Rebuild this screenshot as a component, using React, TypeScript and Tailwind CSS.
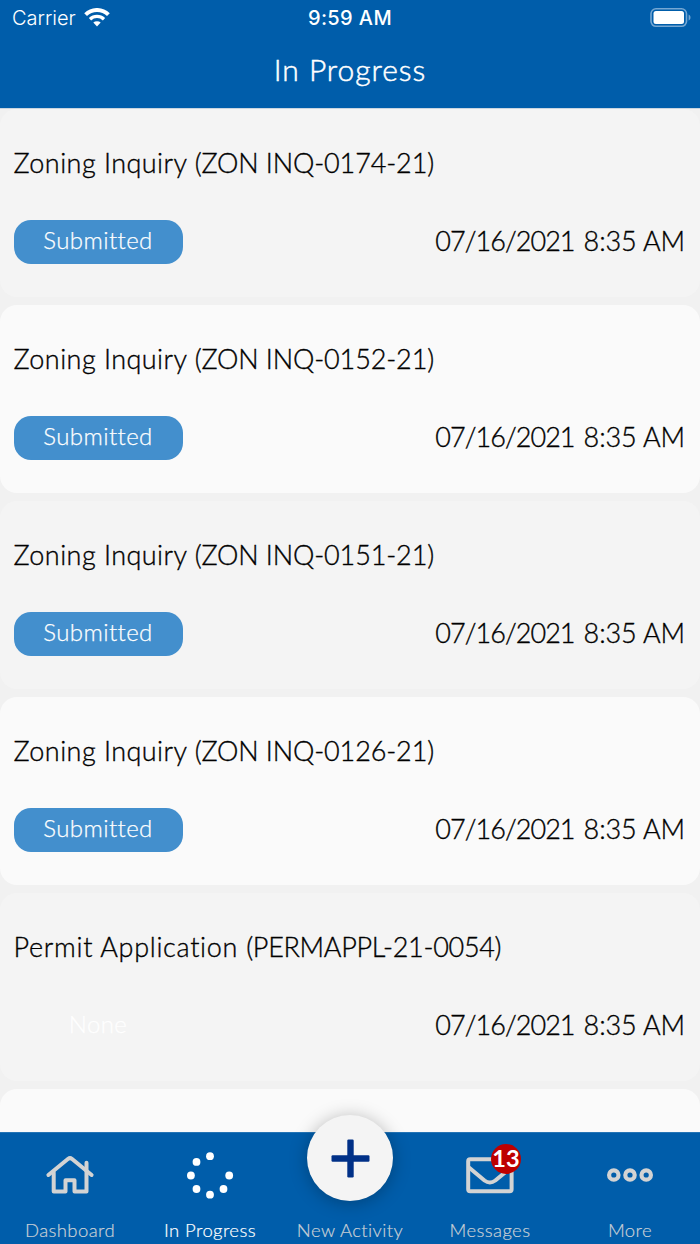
import React from "react";

type Item = { title: string; code: string; status: "Submitted" | "None"; titleTracking: string; codeTracking: string };

const zoning = { title: "Zoning Inquiry", status: "Submitted", titleTracking: "tracking-[0.45px]", codeTracking: "tracking-[-0.12px]" } as const;

const items: Item[] = [
  { ...zoning, code: "(ZON INQ-0174-21)" },
  { ...zoning, code: "(ZON INQ-0152-21)" },
  { ...zoning, code: "(ZON INQ-0151-21)" },
  { ...zoning, code: "(ZON INQ-0126-21)" },
  {
    title: "Permit Application",
    code: "(PERMAPPL-21-0054)",
    status: "None",
    titleTracking: "tracking-[0.7px]",
    codeTracking: "tracking-[-0.3px]",
  },
];

function Wifi() {
  return (
    <svg width="26" height="20" viewBox="0 0 26 20" fill="none" stroke="#fff">
      <path d="M1.6 6.6a16.4 16.4 0 0 1 22.8 0" strokeWidth="4" />
      <path d="M6 11.2a10.2 10.2 0 0 1 14 0" strokeWidth="3.3" />
      <path d="M13 18.4l-3.7-3.8a5.4 5.4 0 0 1 7.4 0z" fill="#fff" stroke="none" />
    </svg>
  );
}

function Battery() {
  return (
    <svg width="42" height="20" viewBox="0 0 42 20">
      <rect x="1" y="0.8" width="35.5" height="17.5" rx="5" fill="none" stroke="#75a7d3" strokeWidth="1.6" />
      <rect x="3.5" y="3" width="30.5" height="13" rx="2.5" fill="#fff" />
      <path d="M38.6 6.4c2.5 1 2.5 5 0 6z" fill="#75a7d3" />
    </svg>
  );
}

function HomeIcon() {
  return (
    <svg width="50" height="42" viewBox="0 0 50 42" fill="none" stroke="#d3d3d3" strokeWidth="4" strokeLinecap="round" strokeLinejoin="round">
      <path d="M3.4 21L23.2 4.8q1.8-1.4 3.6 0L46.6 21" />
      <path d="M8.7 18.5V37.4H20.5V26.2H29.5V37.4H41.5V8.8" />
    </svg>
  );
}

const dots = [[23, 4.2], [9.5, 9.9], [3.9, 23.5], [9.5, 37], [23, 42.7], [36.5, 37], [42.2, 23.5]];

function ProgressIcon() {
  return (
    <svg width="47" height="47" viewBox="0 0 47 47" fill="#fff">
      {dots.map(([x, y]) => (
        <circle key={`${x}-${y}`} cx={x} cy={y} r="3.9" />
      ))}
    </svg>
  );
}

function MailIcon() {
  return (
    <svg width="48" height="37" viewBox="0 0 48 37" fill="none" stroke="#d3d3d3" strokeWidth="4" strokeLinejoin="round">
      <rect x="2.2" y="2.2" width="43.4" height="32" rx="2" />
      <path d="M3 10.5L18.5 23.5q5.4 4 10.8 0L45 10.5" />
    </svg>
  );
}

function MoreIcon() {
  return (
    <svg width="46" height="14" viewBox="0 0 46 14" fill="none" stroke="#d3d3d3" strokeWidth="4.2">
      <circle cx="6.8" cy="7" r="4.7" />
      <circle cx="23" cy="7" r="4.7" />
      <circle cx="39.2" cy="7" r="4.7" />
    </svg>
  );
}

function Tab({ label, active, children }: { label: string; active?: boolean; children?: React.ReactNode }) {
  return (
    <div className="flex flex-1 flex-col items-center">
      <div className="flex h-[85px] items-center justify-center pb-px">{children}</div>
      <span
        className={`text-[18.5px] leading-6 font-light tracking-[0.4px] whitespace-nowrap [-webkit-text-stroke:0.2px] ${active ? "text-white" : "text-[#c9d0d6]"}`}
      >
        {label}
      </span>
    </div>
  );
}

export default function App() {
  return (
    <div className="flex h-[1244px] w-[700px] flex-col overflow-hidden bg-[#f1f1f1] font-['Lato',sans-serif]">
      <header className="flex h-[108px] shrink-0 flex-col bg-[#005daa] text-white">
        <div className="grid h-9 grid-cols-3 items-center pr-2 pl-3 font-['Inter',sans-serif] text-[20px]">
          <div className="flex items-center gap-2">
            <span className="font-light">Carrier</span>
            <Wifi />
          </div>
          <span className="pr-1 text-center font-medium tracking-[0.4px]">9:59 AM</span>
          <div className="flex justify-end">
            <Battery />
          </div>
        </div>
        <h1 className="flex h-[67px] items-center justify-center text-[30px] font-light tracking-[0.95px] [-webkit-text-stroke:0.5px]">In Progress</h1>
      </header>

      <main className="flex h-[1024px] shrink-0 flex-col gap-2 overflow-hidden border-t border-[#c9d5e0]">
        {items.map((item, i) => (
          <section
            key={item.code}
            className={`flex h-[188px] shrink-0 flex-col rounded-[17px] pr-[15px] pl-[13.5px] ${i % 2 ? "bg-[#fafafa]" : "bg-[#f4f4f4]"}`}
          >
            <h2
              className={`mt-[34px] h-10 text-[27px] leading-10 font-light whitespace-nowrap text-black [-webkit-text-stroke:0.35px] ${item.titleTracking}`}
            >
              {item.title} <span className={item.codeTracking}>{item.code}</span>
            </h2>
            <div className="mt-[37px] flex h-11 items-center justify-between">
              <span
                className={`flex h-11 w-[169px] items-center justify-center rounded-[17px] pb-[5px] text-[24px] font-light tracking-[0.4px] text-white [-webkit-text-stroke:0.25px] ${item.status === "Submitted" ? "bg-[#438fcd]" : ""}`}
              >
                {item.status}
              </span>
              <time className="flex gap-[9px] pb-0.5 text-[27px] font-light text-black [-webkit-text-stroke:0.35px]">
                <span className="tracking-[-0.95px]">07/16/2021</span>
                <span className="tracking-[-0.1px]">8:35 AM</span>
              </time>
            </div>
          </section>
        ))}
        <section className="h-[188px] shrink-0 rounded-[17px] bg-[#fafafa]" />
      </main>

      <nav className="relative flex h-28 shrink-0 border-t border-[#2474b6] bg-[#005daa]">
        <Tab label="Dashboard"><HomeIcon /></Tab>
        <Tab label="In Progress" active><ProgressIcon /></Tab>
        <Tab label="New Activity">
          <button className="absolute -top-[18px] left-[307px] flex size-[86px] items-center justify-center rounded-full bg-[#f4f4f4] shadow-[0_2px_18px_rgba(0,0,0,0.28)]">
            <svg width="39" height="39" viewBox="0 0 39 39" fill="#003087">
              <rect x="16.3" y="0.5" width="6.4" height="38" rx="1.2" />
              <rect x="0.5" y="16.3" width="38" height="6.4" rx="1.2" />
            </svg>
          </button>
        </Tab>
        <Tab label="Messages">
          <div className="relative">
            <MailIcon />
            <span className="absolute -top-[13px] left-[25px] flex size-[30px] items-center justify-center rounded-full bg-[#be0000] text-[23.5px] font-bold text-white">13</span>
          </div>
        </Tab>
        <Tab label="More"><MoreIcon /></Tab>
      </nav>
    </div>
  );
}
